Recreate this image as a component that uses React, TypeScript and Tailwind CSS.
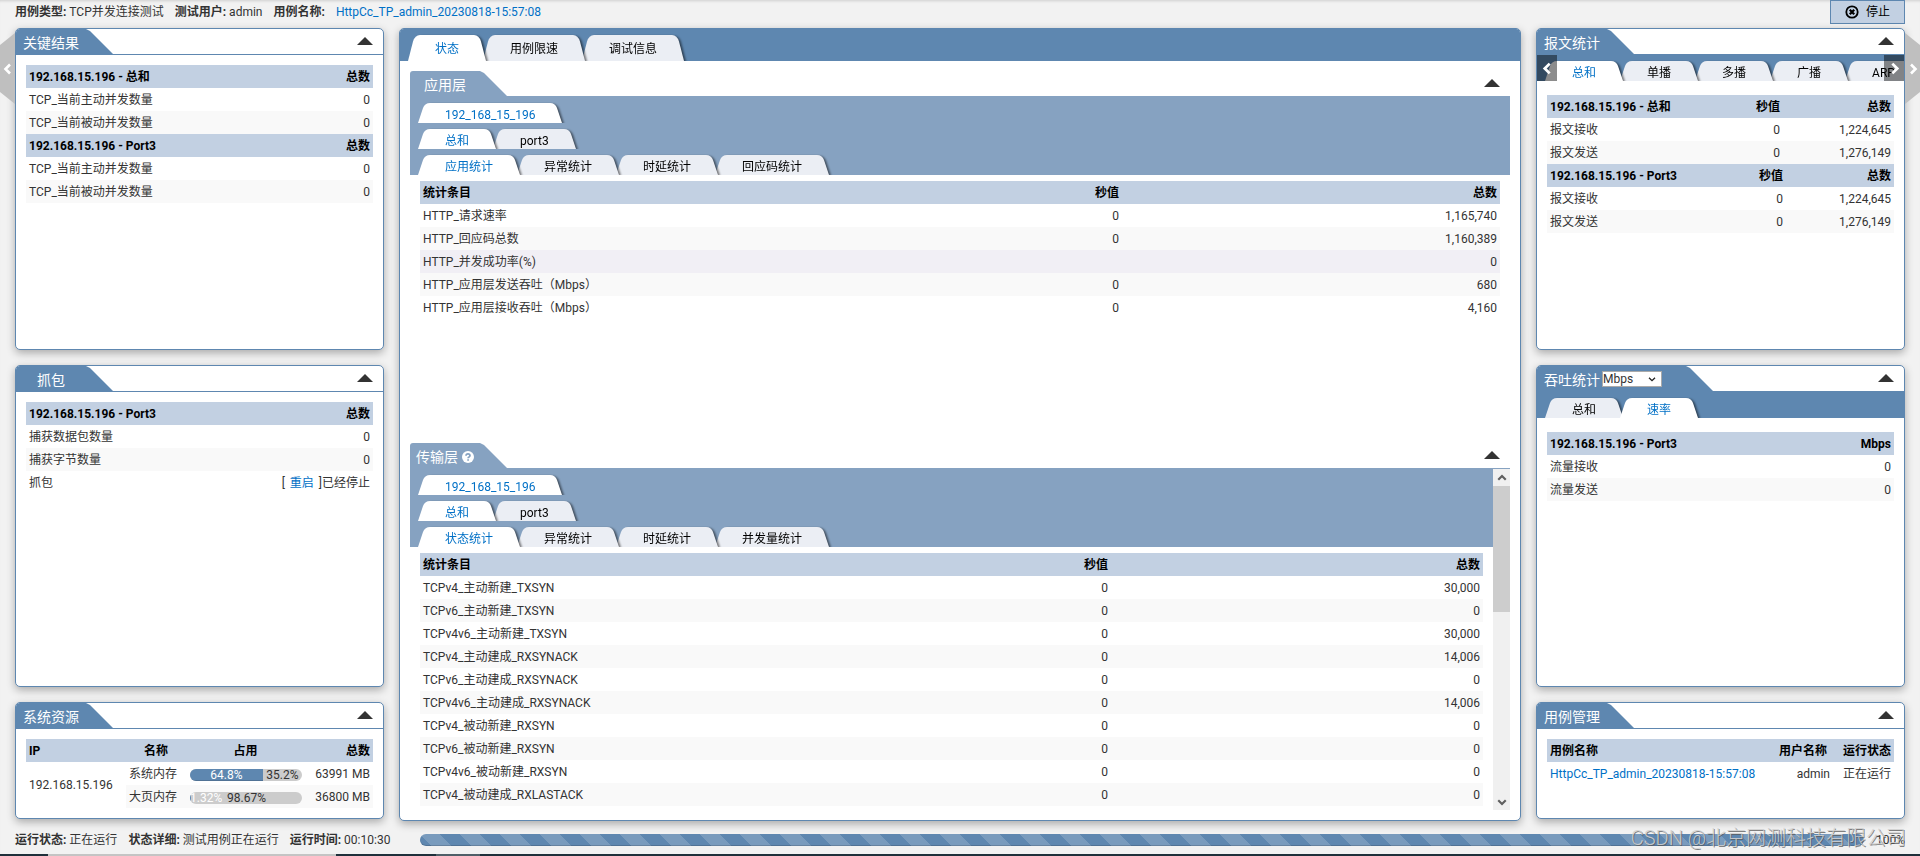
import type { ReactNode } from 'react';

type Align = 'left' | 'center' | 'right';

const alignClass: Record<Align, string> = {
  left: 'text-left',
  center: 'text-center',
  right: 'text-right',
};

const linkClass = 'text-[#0070c6] hover:underline';

function Chevron({ dir, className }: { dir: 'left' | 'right' | 'up' | 'down'; className: string }) {
  const d = {
    left: 'M8 1.5 3.5 6 8 10.5',
    right: 'M4 1.5 8.5 6 4 10.5',
    up: 'M1.5 8 6 3.5 10.5 8',
    down: 'M1.5 4 6 8.5 10.5 4',
  }[dir];
  return (
    <svg viewBox="0 0 12 12" className={className} fill="none" stroke="currentColor" aria-hidden="true">
      <path d={d} />
    </svg>
  );
}

function CollapseButton({ label }: { label: string }) {
  return (
    <button type="button" aria-label={label} className="pb-px text-[#333]">
      <svg viewBox="0 0 16 8" className="block h-2 w-4" fill="currentColor" aria-hidden="true">
        <path d="M8 0 16 8H0z" />
      </svg>
    </button>
  );
}

function Tab({ label, active, tall, z }: { label: string; active: boolean; tall: boolean; z: number }) {
  return (
    <button
      type="button"
      role="tab"
      aria-selected={active}
      style={{ zIndex: z }}
      className={`relative -mr-[3px] flex shrink-0 text-xs whitespace-nowrap drop-shadow-[2px_1px_1px_rgba(0,0,0,0.55)] ${tall ? 'h-[26px]' : 'h-5'} ${active ? 'text-[#0070c6]' : 'text-black'}`}
    >
      <svg viewBox="0 0 13 20" preserveAspectRatio="none" className={`-mr-px h-full w-[13px] ${active ? 'fill-white' : 'fill-[#ebeef4]'}`} aria-hidden="true">
        <path d="M0 20 5 5Q7 0 12 0H13V20z" />
      </svg>
      <span className={`flex h-full items-center px-[15px] ${active ? 'bg-white' : 'bg-[#ebeef4]'} ${tall ? 'pt-[2px]' : 'pt-[3px]'}`}>
        {label}
      </span>
      <svg viewBox="0 0 13 20" preserveAspectRatio="none" className={`-ml-px h-full w-[13px] ${active ? 'fill-white' : 'fill-[#ebeef4]'}`} aria-hidden="true">
        <path d="M0 0H1Q6 0 8 5L13 20H0z" />
      </svg>
    </button>
  );
}

function Tabs({ items, active = 0, tall = false }: { items: string[]; active?: number; tall?: boolean }) {
  return (
    <div role="tablist" className="isolate flex overflow-hidden pt-[6px] pl-2">
      {items.map((t, i) => (
        <Tab key={t} label={t} active={i === active} tall={tall} z={i === active ? 20 : 10 - i} />
      ))}
    </div>
  );
}

function TitleTab({ children, light = false }: { children: ReactNode; light?: boolean }) {
  return (
    <h2
      className={`flex h-full min-w-[97px] items-center justify-center rounded-tl-[3px] pt-[3px] pr-[27px] text-sm whitespace-nowrap text-white [clip-path:polygon(0_0,calc(100%_-_27px)_0,calc(100%_-_23px)_2px,100%_100%,0_100%)] ${light ? 'bg-[#86a2c1]' : 'bg-[#5e87b0]'}`}
    >
      {children}
    </h2>
  );
}

function Card({ title, name, className = '', children }: { title: ReactNode; name: string; className?: string; children: ReactNode }) {
  return (
    <section className={`flex flex-col overflow-hidden rounded-[5px] border border-[#5e87b0] bg-white shadow-[0_3px_8px_rgba(0,0,0,0.3)] ${className}`}>
      <header className="flex h-[26px] shrink-0 items-center justify-between border-b border-[#5e87b0] pr-[10px]">
        <TitleTab>{title}</TitleTab>
        <CollapseButton label={`折叠${name}`} />
      </header>
      {children}
    </section>
  );
}

type Col = { title: string; align?: Align; headAlign?: Align; width?: string };

function DataTable({ cols, rows, hover = -1 }: { cols: Col[]; rows: ReactNode[][]; hover?: number }) {
  return (
    <table className="w-full table-fixed border-collapse">
      <colgroup>
        {cols.map((c) => (
          <col key={c.title} className={c.width ?? ''} />
        ))}
      </colgroup>
      <thead>
        <tr className="h-[23px] bg-[#c2d0e2] text-black">
          {cols.map((c) => (
            <th key={c.title} scope="col" className={`px-[3px] font-bold whitespace-nowrap ${alignClass[c.headAlign ?? c.align ?? 'left']}`}>
              {c.title}
            </th>
          ))}
        </tr>
      </thead>
      <tbody>
        {rows.map((r, i) => (
          <tr key={i} className={`h-[23px] ${i === hover ? 'bg-[#f1eff5]' : i % 2 ? 'bg-[#f9f9f9]' : 'bg-white'}`}>
            {r.map((cell, j) => (
              <td key={j} className={`px-[3px] whitespace-nowrap ${alignClass[cols[j].align ?? 'left']}`}>
                {cell}
              </td>
            ))}
          </tr>
        ))}
      </tbody>
    </table>
  );
}

function UsageBar({ used, free, percent }: { used: string; free: string; percent: number }) {
  return (
    <div className="flex h-3 overflow-hidden rounded-md bg-[#ccc] text-center leading-3">
      <div className="h-full bg-[#5e87b0] text-white shadow-[inset_0_-1px_0_rgba(0,0,0,0.15)]" style={{ width: `${percent}%` }}>
        {used}
      </div>
      <div className="relative flex-1">{free}</div>
    </div>
  );
}

function SystemTable() {
  return (
    <table className="w-full table-fixed border-collapse">
      <colgroup>
        <col />
        <col className="w-[60px]" />
        <col className="w-[119px]" />
        <col className="w-[68px]" />
      </colgroup>
      <thead>
        <tr className="h-[23px] bg-[#c2d0e2] text-black">
          <th scope="col" className="px-[3px] text-left">IP</th>
          <th scope="col" className="px-[3px] text-center">名称</th>
          <th scope="col" className="px-[3px] text-center">占用</th>
          <th scope="col" className="px-[3px] text-right">总数</th>
        </tr>
      </thead>
      <tbody>
        <tr className="h-[23px]">
          <td rowSpan={2} className="px-[3px]">192.168.15.196</td>
          <td className="px-[3px]">系统内存</td>
          <td className="pt-[2px] pr-[3px] pl-1"><UsageBar used="64.8%" free="35.2%" percent={65} /></td>
          <td className="px-[3px] text-right whitespace-nowrap">63991 MB</td>
        </tr>
        <tr className="h-[23px]">
          <td className="bg-[#f9f9f9] px-[3px]">大页内存</td>
          <td className="bg-[#f9f9f9] pt-[2px] pr-[3px] pl-1"><UsageBar used="1.32%" free="98.67%" percent={1} /></td>
          <td className="bg-[#f9f9f9] px-[3px] text-right whitespace-nowrap">36800 MB</td>
        </tr>
      </tbody>
    </table>
  );
}

function TabBand({ groups }: { groups: string[][] }) {
  return (
    <div className="bg-[#86a2c1]">
      {groups.map((g) => (
        <Tabs key={g.join()} items={g} />
      ))}
    </div>
  );
}

const countCols = (name: string): Col[] => [{ title: name }, { title: '总数', align: 'right', width: 'w-[100px]' }];

const layerCols: Col[] = [
  { title: '统计条目', width: 'w-[40%]' },
  { title: '秒值', align: 'right', width: 'w-[25%]' },
  { title: '总数', align: 'right', width: 'w-[35%]' },
];

const appRows = [
  ['HTTP_请求速率', '0', '1,165,740'],
  ['HTTP_回应码总数', '0', '1,160,389'],
  ['HTTP_并发成功率(%)', '', '0'],
  ['HTTP_应用层发送吞吐（Mbps）', '0', '680'],
  ['HTTP_应用层接收吞吐（Mbps）', '0', '4,160'],
];

const transportRows = [
  ['TCPv4_主动新建_TXSYN', '0', '30,000'],
  ['TCPv6_主动新建_TXSYN', '0', '0'],
  ['TCPv4v6_主动新建_TXSYN', '0', '30,000'],
  ['TCPv4_主动建成_RXSYNACK', '0', '14,006'],
  ['TCPv6_主动建成_RXSYNACK', '0', '0'],
  ['TCPv4v6_主动建成_RXSYNACK', '0', '14,006'],
  ['TCPv4_被动新建_RXSYN', '0', '0'],
  ['TCPv6_被动新建_RXSYN', '0', '0'],
  ['TCPv4v6_被动新建_RXSYN', '0', '0'],
  ['TCPv4_被动建成_RXLASTACK', '0', '0'],
];

const packetRows = [
  ['报文接收', '0', '1,224,645'],
  ['报文发送', '0', '1,276,149'],
];

const keyRows = [
  ['TCP_当前主动并发数量', '0'],
  ['TCP_当前被动并发数量', '0'],
];

export default function App() {
  return (
    <div className="flex h-screen min-h-[760px] flex-col bg-[#f2f2f2] font-[Roboto,'Noto_Sans_CJK_SC',sans-serif] text-xs leading-4 text-[#333] shadow-[inset_0_3px_3px_-2px_rgba(0,0,0,0.15)]">
      <header className="flex h-7 shrink-0 items-start justify-between px-[15px]">
        <div className="flex gap-[11px] pt-1">
          <span><b>用例类型:</b> TCP并发连接测试</span>
          <span><b>测试用户:</b> admin</span>
          <b>用例名称:</b>
          <a href="#case" className={linkClass}>HttpCc_TP_admin_20230818-15:57:08</a>
        </div>
        <button type="button" className="flex h-6 w-[75px] items-center justify-center gap-[7px] border border-[#5e87b0] bg-[#c2d0e2] text-black">
          <svg viewBox="0 0 14 14" className="size-[14px]" fill="none" stroke="currentColor" aria-hidden="true">
            <circle cx="7" cy="7" r="5.7" strokeWidth="1.8" />
            <path d="M4.8 4.8 9.2 9.2M9.2 4.8 4.8 9.2" strokeWidth="2.3" />
          </svg>
          停止
        </button>
      </header>

      <main className="flex min-h-0 flex-1">
        <button type="button" aria-label="展开左侧" className="mt-[5px] flex h-[71px] w-[15px] shrink-0 items-center justify-center bg-[#bfbfbf] text-white [clip-path:polygon(0_12px,100%_0,100%_100%,0_59px)]">
          <Chevron dir="left" className="size-3 stroke-[2.6]" />
        </button>

        <div className="flex w-[369px] shrink-0 flex-col gap-[15px] pb-[2px]">
          <Card name="关键结果" title="关键结果" className="flex-1">
            <div className="p-[10px]">
              <DataTable cols={countCols('192.168.15.196 - 总和')} rows={keyRows} />
              <DataTable cols={countCols('192.168.15.196 - Port3')} rows={keyRows} />
            </div>
          </Card>
          <Card name="抓包" title="抓包" className="flex-1">
            <div className="p-[10px]">
              <DataTable
                cols={countCols('192.168.15.196 - Port3')}
                rows={[
                  ['捕获数据包数量', '0'],
                  ['捕获字节数量', '0'],
                  ['抓包', <>[ <a href="#restart" className={`mx-[2px] ${linkClass}`}>重启</a> ]已经停止</>],
                ]}
              />
            </div>
          </Card>
          <Card name="系统资源" title="系统资源" className="shrink-0">
            <div className="p-[10px]">
              <SystemTable />
            </div>
          </Card>
        </div>

        <section className="mx-[15px] flex min-w-0 flex-1 flex-col overflow-hidden rounded-[5px] border border-[#5e87b0] bg-white shadow-[0_3px_8px_rgba(0,0,0,0.3)]">
          <div className="bg-[#5e87b0]">
            <Tabs items={['状态', '用例限速', '调试信息']} tall />
          </div>
          <div className="flex min-h-0 flex-1 flex-col gap-[5px] p-[10px]">
            <section className="flex min-h-0 flex-1 flex-col">
              <header className="flex h-[26px] shrink-0 items-center justify-between border-b border-[#86a2c1] pr-[10px]">
                <TitleTab light>应用层</TitleTab>
                <CollapseButton label="折叠应用层" />
              </header>
              <TabBand groups={[['192_168_15_196'], ['总和', 'port3'], ['应用统计', '异常统计', '时延统计', '回应码统计']]} />
              <div className="px-[10px] pt-[6px]">
                <DataTable cols={layerCols} rows={appRows} hover={2} />
              </div>
            </section>

            <section className="flex min-h-0 flex-1 flex-col">
              <header className="flex h-[26px] shrink-0 items-center justify-between border-b border-[#86a2c1] pr-[10px]">
                <TitleTab light>
                  传输层
                  <svg viewBox="0 0 12 12" className="ml-1 size-3" role="img" aria-label="帮助">
                    <circle cx="6" cy="6" r="6" fill="white" />
                    <path d="M4 4.7Q4.1 2.9 6 2.9T8 4.6Q8 5.5 7 6 6.1 6.4 6.1 7.3M6.1 8.2V9.7" fill="none" stroke="#86a2c1" strokeWidth="1.7" />
                  </svg>
                </TitleTab>
                <CollapseButton label="折叠传输层" />
              </header>
              <div className="flex min-h-0 flex-1">
                <div className="min-w-0 flex-1 overflow-hidden">
                  <TabBand groups={[['192_168_15_196'], ['总和', 'port3'], ['状态统计', '异常统计', '时延统计', '并发量统计']]} />
                  <div className="px-[10px] pt-[6px]">
                    <DataTable cols={layerCols} rows={transportRows} />
                  </div>
                </div>
                <div className="flex w-[17px] shrink-0 flex-col bg-[#f0f0f0] text-[#606060]">
                  <button type="button" aria-label="向上滚动" className="flex h-[17px] items-center justify-center">
                    <Chevron dir="up" className="size-[10px] stroke-[2.6]" />
                  </button>
                  <div className="flex-1">
                    <div className="h-[41%] bg-[#cdcdcd]" />
                  </div>
                  <button type="button" aria-label="向下滚动" className="flex h-[17px] items-center justify-center">
                    <Chevron dir="down" className="size-[10px] stroke-[2.6]" />
                  </button>
                </div>
              </div>
            </section>
          </div>
        </section>

        <div className="flex w-[369px] shrink-0 flex-col gap-[15px] pb-[2px]">
          <Card name="报文统计" title="报文统计" className="flex-1">
            <div className="relative bg-[#5e87b0]">
              <Tabs items={['总和', '单播', '多播', '广播', 'ARP']} />
              <button type="button" aria-label="上一个" className="absolute inset-y-0 left-0 flex w-5 items-center justify-center bg-black/45 text-white">
                <Chevron dir="left" className="size-[13px] stroke-[2.6]" />
              </button>
              <button type="button" aria-label="下一个" className="absolute inset-y-0 right-0 flex w-5 items-center justify-center bg-black/45 text-white">
                <Chevron dir="right" className="size-[13px] stroke-[2.6]" />
              </button>
            </div>
            <div className="px-[10px] pt-[14px]">
              <DataTable
                cols={[{ title: '192.168.15.196 - 总和' }, { title: '秒值', align: 'right', width: 'w-[80px]' }, { title: '总数', align: 'right', width: 'w-[111px]' }]}
                rows={packetRows}
              />
              <DataTable
                cols={[{ title: '192.168.15.196 - Port3' }, { title: '秒值', align: 'right', width: 'w-[80px]' }, { title: '总数', align: 'right', width: 'w-[108px]' }]}
                rows={packetRows}
              />
            </div>
          </Card>

          <Card
            name="吞吐统计"
            className="flex-1"
            title={
              <span className="flex items-center pr-6 pl-[7px]">
                <label htmlFor="unit">吞吐统计</label>
                <span className="relative ml-[2px] flex">
                  <select id="unit" defaultValue="Mbps" className="-mt-[3px] h-4 w-[60px] appearance-none border border-[#aaa] bg-white text-xs leading-[14px] text-[#333]">
                    <option>Mbps</option>
                    <option>Kbps</option>
                  </select>
                  <Chevron dir="down" className="pointer-events-none absolute top-px right-[6px] size-2 stroke-2 text-[#222]" />
                </span>
              </span>
            }
          >
            <div className="bg-[#5e87b0]">
              <Tabs items={['总和', '速率']} active={1} />
            </div>
            <div className="px-[10px] pt-[14px]">
              <DataTable
                cols={[{ title: '192.168.15.196 - Port3' }, { title: 'Mbps', align: 'right', width: 'w-[100px]' }]}
                rows={[
                  ['流量接收', '0'],
                  ['流量发送', '0'],
                ]}
              />
            </div>
          </Card>

          <Card name="用例管理" title="用例管理" className="min-h-[117px] shrink-0">
            <div className="p-[10px]">
              <DataTable
                cols={[
                  { title: '用例名称' },
                  { title: '用户名称', align: 'right', headAlign: 'center', width: 'w-[60px]' },
                  { title: '运行状态', align: 'right', width: 'w-[61px]' },
                ]}
                rows={[[<a href="#case" className={linkClass}>HttpCc_TP_admin_20230818-15:57:08</a>, 'admin', '正在运行']]}
              />
            </div>
          </Card>
        </div>

        <button type="button" aria-label="展开右侧" className="mt-[5px] flex h-[71px] w-[15px] shrink-0 items-center justify-center bg-[#bfbfbf] text-white [clip-path:polygon(0_0,100%_12px,100%_59px,0_100%)]">
          <Chevron dir="right" className="size-3 stroke-[2.6]" />
        </button>
      </main>

      <footer className="relative flex h-[33px] shrink-0 items-center px-[15px] pt-[5px]">
        <div className="flex w-[405px] shrink-0 gap-[11px]">
          <span><b>运行状态:</b> 正在运行</span>
          <span><b>状态详细:</b> 测试用例正在运行</span>
          <span><b>运行时间:</b> 00:10:30</span>
        </div>
        <div
          role="progressbar"
          aria-label="运行进度"
          aria-valuenow={100}
          className="mr-3 h-3 flex-1 rounded-md bg-[#5e87b0] bg-[linear-gradient(45deg,rgba(255,255,255,0.17)_25%,transparent_25%,transparent_50%,rgba(255,255,255,0.17)_50%,rgba(255,255,255,0.17)_75%,transparent_75%)] bg-[length:40px_40px] shadow-[inset_0_-1px_0_rgba(0,0,0,0.15)]"
        />
        <span>100%</span>
        <span className="absolute right-[14px] bottom-1 text-[20px] leading-6 font-light whitespace-nowrap text-[#d0d0d0]/90 [text-shadow:1px_1px_0_rgba(90,90,90,0.75)]">
          CSDN @北京网测科技有限公司
        </span>
      </footer>
      <div className="flex h-[2px] shrink-0 bg-[#1f303b]">
        <div className="ml-12 w-72 bg-[#c4c4c4]" />
        <div className="ml-[100px] w-11 bg-[#4f5f68]" />
      </div>
    </div>
  );
}
